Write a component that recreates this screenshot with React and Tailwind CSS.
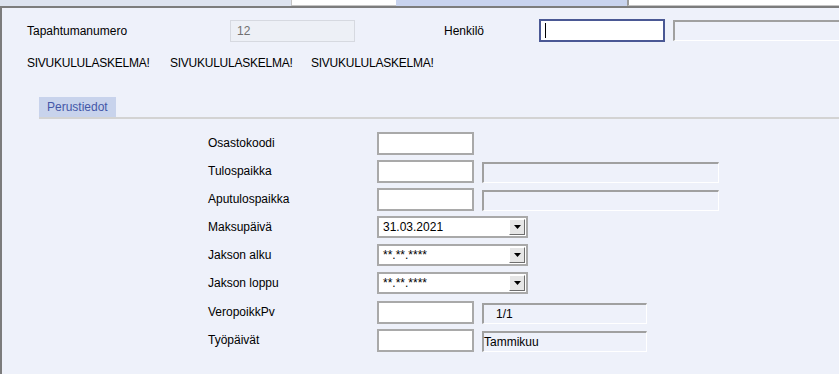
import React from "react";

const font = { fontFamily: '"Liberation Sans", Arial, sans-serif' };

function TextInput() {
  return <div className="w-[97px] h-[23px] bg-white border-2 border-[#a9a9a9]" />;
}

function ReadOnly({ width, children, pad = "pl-[1px]" }) {
  return (
    <div
      className={`${width} ${pad} h-[21px] mt-[2px] flex items-center border-t-2 border-l-2 border-b border-r border-t-[#a0a0a0] border-l-[#a0a0a0] border-b-white border-r-white text-[12px] text-black`}
    >
      {children}
    </div>
  );
}

function Dropdown({ value }) {
  return (
    <div className="w-[151px] h-[22px] bg-white border-2 border-[#a9a9a9] flex items-center">
      <span className="flex-1 pl-[4px] text-[12px] text-black leading-none">{value}</span>
      <div className="w-[16px] h-[16px] mr-[1px] bg-[#e6e6e6] border-t border-l border-t-white border-l-white border-b border-r border-b-[#6e6e6e] border-r-[#6e6e6e] flex items-center justify-center">
        <svg width="7" height="4" viewBox="0 0 7 4">
          <path d="M0 0h7L3.5 4z" fill="#000" />
        </svg>
      </div>
    </div>
  );
}

function Row({ label, children }) {
  return (
    <div className="flex items-start h-[22px]">
      <div className="w-[169px] h-[22px] flex items-center text-[12px] text-black">{label}</div>
      <div className="flex items-start gap-[8px]">{children}</div>
    </div>
  );
}

export default function App() {
  return (
    <div className="w-[839px] h-[374px] overflow-hidden flex flex-col bg-[#eef1fa]" style={font}>
      {/* Top strip */}
      <div className="flex h-[6px] shrink-0">
        <div className="w-[291px] bg-[#dde3ef]" />
        <div className="w-[105px] bg-white border-l border-b border-[#c4c4c4]" />
        <div className="w-[231px] bg-[#c8d3ee]" />
        <div className="flex-1 bg-white border-l-2 border-b border-l-[#9a9a9a] border-b-[#c4c4c4]" />
      </div>

      <div className="flex-1 border-t-2 border-l-2 border-[#7c7c7c]">
        {/* Header fields */}
        <div className="flex items-center mt-[11px] pl-[25px]">
          <div className="w-[203px] text-[12px] text-black">Tapahtumanumero</div>
          <div className="w-[125px] h-[22px] border border-[#d6d9e0] bg-[#edf0f6] flex items-center pl-[6px] text-[12px] text-[#707070]">
            12
          </div>
          <div className="w-[89px]" />
          <div className="w-[95px] text-[12px] text-black">Henkilö</div>
          <div className="w-[126px] h-[23px] bg-white border-2 border-[#4a5894] flex items-center pl-[4px]">
            <div className="w-[1px] h-[15px] bg-black" />
          </div>
          <div className="flex-1 ml-[8px] h-[21px] border-t-2 border-l-2 border-t-[#a0a0a0] border-l-[#a0a0a0] border-b border-b-white" />
        </div>

        <div className="flex mt-[12px] pl-[25px] text-[12px] text-black tracking-[-0.25px]">
          <span className="w-[143px]">SIVUKULULASKELMA!</span>
          <span className="w-[141px]">SIVUKULULASKELMA!</span>
          <span>SIVUKULULASKELMA!</span>
        </div>

        {/* Tabs */}
        <div className="mt-[25px] ml-[37px] border-b-2 border-[#d3d3d3] flex">
          <div className="h-[20px] px-[8px] bg-[#c8d3ec] flex items-center text-[12px] text-[#4457a8]">
            Perustiedot
          </div>
        </div>

        {/* Form */}
        <div className="mt-[13px] ml-[206px] flex flex-col gap-[6px]">
          <Row label="Osastokoodi">
            <TextInput />
          </Row>
          <Row label="Tulospaikka">
            <TextInput />
            <ReadOnly width="w-[237px]" />
          </Row>
          <Row label="Aputulospaikka">
            <TextInput />
            <ReadOnly width="w-[237px]" />
          </Row>
          <Row label="Maksupäivä">
            <Dropdown value="31.03.2021" />
          </Row>
          <Row label="Jakson alku">
            <Dropdown value="**.**.****" />
          </Row>
          <Row label="Jakson loppu">
            <Dropdown value="**.**.****" />
          </Row>
          <div className="mt-[1px]">
            <Row label="VeropoikkPv">
              <TextInput />
              <ReadOnly width="w-[165px]" pad="pl-[12px]">1/1</ReadOnly>
            </Row>
          </div>
          <Row label="Työpäivät">
            <TextInput />
            <ReadOnly width="w-[165px]" pad="pl-0">Tammikuu</ReadOnly>
          </Row>
        </div>
      </div>
    </div>
  );
}
